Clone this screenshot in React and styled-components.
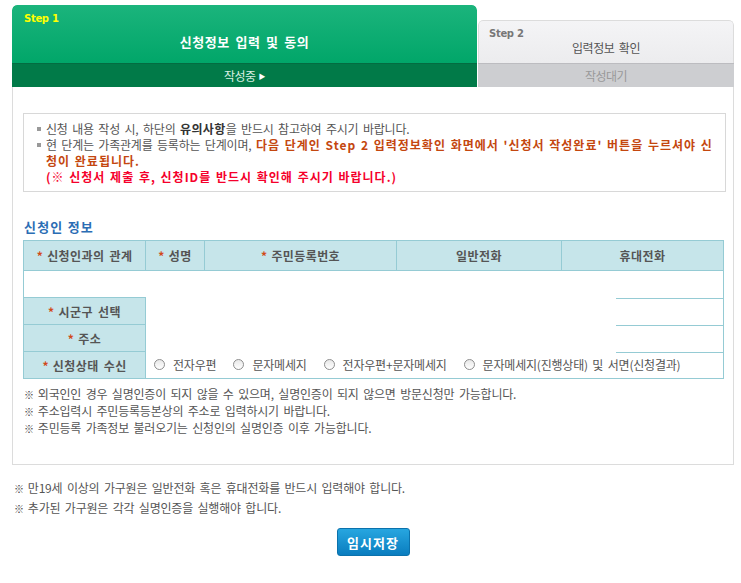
import React from "react";
import styled, { createGlobalStyle } from "styled-components";

const Global = createGlobalStyle`
  html, body { margin: 0; padding: 0; background: #fff; }
  body {
    font-family: "Noto Sans CJK KR", "Noto Sans", sans-serif;
    font-size: 12px;
    color: #555;
  }
`;

const Page = styled.div`
  width: 722px;
  padding: 5px 0 0 12px;
`;

const Tabs = styled.div`
  display: flex;
  align-items: flex-end;
  gap: 1px;
`;

const Tab = styled.div`
  display: flex;
  flex-direction: column;
  width: ${(p) => p.$w}px;
  border-radius: 5px 5px 0 0;
  overflow: hidden;
`;

const TabTop = styled.div`
  position: relative;
  height: ${(p) => p.$h}px;
  display: flex;
  align-items: center;
  justify-content: center;
  box-sizing: border-box;
  background: ${(p) =>
    p.$active
      ? "linear-gradient(#1bb47c, #01a669)"
      : "linear-gradient(#f4f4f6, #ececee)"};
  border: ${(p) => (p.$active ? "none" : "1px solid #dcdcdc")};
  border-bottom: none;
  border-radius: 5px 5px 0 0;
`;

const StepLabel = styled.span`
  position: absolute;
  left: ${(p) => (p.$active ? 12 : 10)}px;
  top: ${(p) => (p.$active ? 8 : 7)}px;
  font-family: "DejaVu Sans", sans-serif;
  font-weight: bold;
  font-size: 10px;
  letter-spacing: -0.3px;
  color: ${(p) => (p.$active ? "#ffff00" : "#777")};
`;

const TabTitle = styled.span`
  margin-top: ${(p) => (p.$active ? 14 : 11)}px;
  font-weight: ${(p) => (p.$active ? "bold" : "normal")};
  font-size: ${(p) => (p.$active ? 13 : 12)}px;
  letter-spacing: ${(p) => (p.$active ? "0.6px" : "-0.4px")};
  word-spacing: 2px;
  color: ${(p) => (p.$active ? "#fff" : "#555")};
`;

const TabBar = styled.div`
  height: 24px;
  display: flex;
  align-items: center;
  justify-content: center;
  gap: 3px;
  box-sizing: border-box;
  background: ${(p) => (p.$active ? "#017a48" : "#cdced1")};
  border-top: 1px solid ${(p) => (p.$active ? "#036c41" : "#bcbcc0")};
  color: ${(p) => (p.$active ? "#d9efe3" : "#999")};
  font-size: 12px;
  letter-spacing: -0.5px;
`;

const Arrow = styled.span`
  font-size: 7px;
  color: #fff;
`;

const Box = styled.div`
  border: 1px solid #dcdcdc;
  border-top: none;
  padding: 26px 7px 27px 10px;
`;

const Notice = styled.div`
  border: 1px solid #d8d8d8;
  padding: 7px 4px 6px 13px;
  line-height: 16px;
  letter-spacing: -0.2px;
  word-spacing: 2px;
`;

const NoticeLine = styled.div`
  position: relative;
  padding-left: 9px;
`;

const Bullet = styled.span`
  position: absolute;
  left: 0;
  top: 6px;
  width: 4px;
  height: 4px;
  background: #999;
`;

const Strong = styled.b`
  color: ${(p) => p.$c || "#333"};
  font-weight: bold;
  letter-spacing: ${(p) => (p.$wide ? "1px" : "0.4px")};
  word-spacing: 1px;
`;

const SectionTitle = styled.h3`
  margin: 27px 0 5px 1px;
  font-size: 13px;
  line-height: 16px;
  font-weight: bold;
  color: #2b6db4;
  letter-spacing: 1.2px;
`;

const Table = styled.table`
  width: 700px;
  border-collapse: collapse;
  table-layout: fixed;
`;

const Th = styled.th`
  height: 29px;
  padding: 0;
  background: #c6e5ea;
  border: 1px solid #95cbd4;
  font-size: 12px;
  font-weight: bold;
  color: #555;
  text-align: center;
  letter-spacing: 0.4px;
  word-spacing: 2px;
`;

const Req = styled.span`
  color: #d14a1a;
  margin-right: 4px;
`;

const EmptyCell = styled.td`
  height: 26px;
  padding: 0;
  border-left: 1px solid #95cbd4;
  border-right: 1px solid #95cbd4;
`;

const LabelCell = styled(Th)`
  height: 26px;
`;

const ValueCell = styled.td`
  padding: 0 0 0 8px;
  border-right: 1px solid #95cbd4;
  border-bottom: ${(p) => (p.$last ? "1px solid #95cbd4" : "none")};
  background-image: linear-gradient(#95cbd4, #95cbd4);
  background-size: 107px 1px;
  background-position: right top;
  background-repeat: no-repeat;
`;

const Radios = styled.div`
  display: flex;
  align-items: center;
  gap: 17px;
`;

const RadioItem = styled.label`
  display: flex;
  align-items: center;
  gap: 8px;
  letter-spacing: -0.2px;
  word-spacing: 2px;
  color: #555;
`;

const Radio = styled.span`
  width: 11px;
  height: 11px;
  border-radius: 50%;
  border: 1px solid #8e8e8e;
  background: linear-gradient(#e8e8e8, #fff);
  box-sizing: border-box;
`;

const Notes = styled.div`
  margin-top: ${(p) => p.$mt}px;
  padding-left: ${(p) => p.$pl}px;
  line-height: ${(p) => p.$lh}px;
  letter-spacing: -0.2px;
  word-spacing: 2px;
  color: #555;
`;

const Mark = styled.span`
  margin-right: 4px;
  font-size: 10px;
  font-weight: bold;
  color: #444;
`;

const Actions = styled.div`
  display: flex;
  justify-content: center;
  margin-top: 10px;
`;

const Button = styled.button`
  width: 73px;
  height: 28px;
  border: 1px solid #0b72ac;
  border-radius: 3px;
  background: linear-gradient(#27a6e0, #0a7dbf);
  color: #fff;
  font-family: inherit;
  font-size: 13px;
  font-weight: bold;
  letter-spacing: 1px;
  cursor: pointer;
`;

const Asterisk = () => <Req>*</Req>;

export default function App() {
  return (
    <>
      <Global />
      <Page>
        <Tabs>
          <Tab $w={465}>
            <TabTop $active $h={58}>
              <StepLabel $active>Step 1</StepLabel>
              <TabTitle $active>신청정보 입력 및 동의</TabTitle>
            </TabTop>
            <TabBar $active>
              작성중<Arrow>▶</Arrow>
            </TabBar>
          </Tab>
          <Tab $w={256}>
            <TabTop $h={43}>
              <StepLabel>Step 2</StepLabel>
              <TabTitle>입력정보 확인</TabTitle>
            </TabTop>
            <TabBar>작성대기</TabBar>
          </Tab>
        </Tabs>
        <Box>
          <Notice>
            <NoticeLine>
              <Bullet />
              신청 내용 작성 시, 하단의 <Strong>유의사항</Strong>을 반드시 참고하여
              주시기 바랍니다.
            </NoticeLine>
            <NoticeLine>
              <Bullet />
              현 단계는 가족관계를 등록하는 단계이며,{" "}
              <Strong $c="#c4470f" $wide>
                다음 단계인 Step 2 입력정보확인 화면에서 '신청서 작성완료' 버튼을
                누르셔야 신청이 완료됩니다.
              </Strong>
            </NoticeLine>
            <NoticeLine>
              <Strong $c="#f5002b" $wide>
                (※ 신청서 제출 후, 신청ID를 반드시 확인해 주시기 바랍니다.)
              </Strong>
            </NoticeLine>
          </Notice>

          <SectionTitle>신청인 정보</SectionTitle>
          <Table>
            <colgroup>
              <col style={{ width: 122 }} />
              <col style={{ width: 59 }} />
              <col style={{ width: 192 }} />
              <col style={{ width: 165 }} />
              <col style={{ width: 162 }} />
            </colgroup>
            <thead>
              <tr>
                <Th><Asterisk />신청인과의 관계</Th>
                <Th><Asterisk />성명</Th>
                <Th><Asterisk />주민등록번호</Th>
                <Th>일반전화</Th>
                <Th>휴대전화</Th>
              </tr>
            </thead>
            <tbody>
              <tr>
                <EmptyCell colSpan={5} />
              </tr>
              <tr>
                <LabelCell><Asterisk />시군구 선택</LabelCell>
                <ValueCell colSpan={4} />
              </tr>
              <tr>
                <LabelCell><Asterisk />주소</LabelCell>
                <ValueCell colSpan={4} />
              </tr>
              <tr>
                <LabelCell><Asterisk />신청상태 수신</LabelCell>
                <ValueCell colSpan={4} $last>
                  <Radios>
                    <RadioItem><Radio />전자우편</RadioItem>
                    <RadioItem><Radio />문자메세지</RadioItem>
                    <RadioItem><Radio />전자우편+문자메세지</RadioItem>
                    <RadioItem><Radio />문자메세지(진행상태) 및 서면(신청결과)</RadioItem>
                  </Radios>
                </ValueCell>
              </tr>
            </tbody>
          </Table>

          <Notes $mt={7} $pl={1} $lh={16}>
            <div><Mark>※</Mark>외국인인 경우 실명인증이 되지 않을 수 있으며, 실명인증이 되지 않으면 방문신청만 가능합니다.</div>
            <div><Mark>※</Mark>주소입력시 주민등록등본상의 주소로 입력하시기 바랍니다.</div>
            <div><Mark>※</Mark>주민등록 가족정보 불러오기는 신청인의 실명인증 이후 가능합니다.</div>
          </Notes>
        </Box>

        <Notes $mt={13} $pl={2} $lh={19}>
          <div><Mark>※</Mark>만19세 이상의 가구원은 일반전화 혹은 휴대전화를 반드시 입력해야 합니다.</div>
          <div><Mark>※</Mark>추가된 가구원은 각각 실명인증을 실행해야 합니다.</div>
        </Notes>
        <Actions>
          <Button>임시저장</Button>
        </Actions>
      </Page>
    </>
  );
}
